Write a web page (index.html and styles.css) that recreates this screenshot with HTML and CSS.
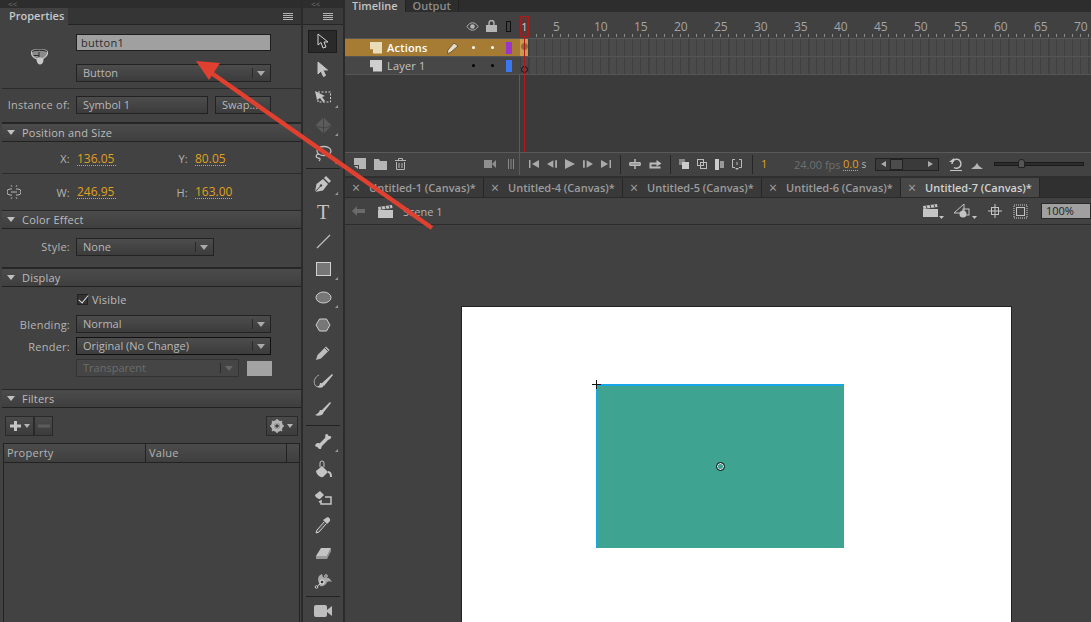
FILE: index.html
```html
<!DOCTYPE html>
<html lang="en">
<head>
    <meta charset="UTF-8">
    <title>Animate - Untitled-7 (Canvas)</title>
    <link rel="stylesheet" href="styles.css">
</head>
<body>
    <div class="app">
        <aside class="props">
            <div class="strip">&lt;&lt;</div>
            <div class="tab-bar">
                <div class="tab-active">Properties</div>
                <div class="menu-lines"></div>
            </div>

            <section class="name-sec">
                <div class="sym-icon">
                    <svg width="17" height="16" viewBox="0 0 17 16"><path d="M3.500 1h10c2 0 3 1 3 3s-1 3-3 4.500l-2 1.500h-6L3 8.500C1 7 .5 6 .5 4s1-3 3-3z" fill="#8a8a8a" stroke="#c4c4c4" stroke-width="1.200"/><path d="M1 2.500C3 1 14 1 16 2.500" stroke="#222" fill="none"/><path d="M8 3v5M2.500 6.500H8" stroke="#2e2e2e" fill="none"/><path d="M6.500 9c3-1 6-1 6 2 0 3-2 4.500-3.500 4.500S6 14 5.500 11z" fill="#c8c8c8"/></svg>
                </div>
                <div class="name-fields">
                    <div class="text-input">button1</div>
                    <div class="select">Button</div>
                </div>
            </section>

            <section class="inst-sec">
                <label class="lbl">Instance of:</label>
                <div class="field sym-field">Symbol 1</div>
                <div class="field swap">Swap...</div>
            </section>

            <div class="sec-head">Position and Size</div>
            <section class="pos-row xy">
                <label class="lbl lbl-x">X:</label><span class="val val-x">136.05</span>
                <label class="lbl lbl-y">Y:</label><span class="val">80.05</span>
            </section>
            <section class="pos-row wh">
                <svg class="link-icon" width="14" height="16" viewBox="0 0 14 16" fill="none" stroke="#b5b5b5"><path d="M5 5H3a3 3 0 0 0 0 6h2M9 5h2a3 3 0 0 1 0 6H9M4 8h6"/><path d="M4 1l1 2M10 1L9 3M4 15l1-2M10 15l-1-2" stroke-width=".8"/></svg>
                <label class="lbl lbl-x">W:</label><span class="val val-x">246.95</span>
                <label class="lbl lbl-y">H:</label><span class="val">163.00</span>
            </section>

            <div class="sec-head">Color Effect</div>
            <section class="style-sec">
                <label class="lbl">Style:</label>
                <div class="select select-short">None</div>
            </section>

            <div class="sec-head">Display</div>
            <section class="display-sec">
                <div class="form-row check-row"><span class="check"></span>Visible</div>
                <div class="form-row"><label class="lbl">Blending:</label><div class="select">Normal</div></div>
                <div class="form-row"><label class="lbl">Render:</label><div class="select select-dark">Original (No Change)</div></div>
                <div class="form-row">
                    <span class="lbl"></span>
                    <div class="select select-off">Transparent</div>
                    <span class="swatch"></span>
                </div>
            </section>

            <div class="sec-head">Filters</div>
            <section class="filter-bar">
                <div class="f-btn f-plus">
                    <svg width="22" height="12" viewBox="0 0 22 12"><path d="M1 6h11M6.500 1v10" stroke="#c4c4c4" stroke-width="3"/><path d="M15 4h6l-3 4z" fill="#b5b5b5"/></svg>
                </div>
                <div class="f-btn f-minus">
                    <svg width="12" height="4" viewBox="0 0 12 4"><path d="M0 2h12" stroke="#5d5d5d" stroke-width="3"/></svg>
                </div>
                <div class="f-btn f-gear">
                    <svg width="24" height="14" viewBox="0 0 24 14"><circle cx="7" cy="7" r="4.500" fill="none" stroke="#b5b5b5" stroke-width="3"/><path d="M7 0v14M0 7h14M2 2l10 10M12 2L2 12" stroke="#b5b5b5" stroke-width="1.600"/><circle cx="7" cy="7" r="1.800" fill="#3c3c3c"/><path d="M17 5h6l-3 4z" fill="#b5b5b5"/></svg>
                </div>
            </section>
            <div class="filter-table">
                <div class="filter-head">
                    <span class="col-prop">Property</span>
                    <span class="col-val">Value</span>
                </div>
            </div>
        </aside>

        <nav class="tools">
            <div class="strip">&lt;&lt;</div>
            <div class="tools-menu"><div class="menu-lines"></div></div>
            <div class="tool tool-on"><svg width="14" height="17" viewBox="0 0 14 17" fill="none" stroke="#d4d4d4"><path d="M2 1v11l3-2.500L7 15l3-1-2-5h4z"/></svg></div>
            <div class="tool"><svg width="14" height="17" viewBox="0 0 14 17"><path d="M2 1v12l3-3 2.500 5.500 2-1L7 9h4.500z" fill="#c4c4c4" stroke="#c4c4c4"/></svg></div>
            <div class="tool more"><svg width="18" height="14" viewBox="0 0 18 14"><path d="M4 2h12.500v10H4z" fill="none" stroke="#d0d0d0" stroke-dasharray="2 1.500"/><path d="M1 1l10 5-3 1 3 4-2 1-3-4-3 2z" fill="#c4c4c4"/></svg></div>
            <div class="tool more"><svg width="17" height="17" viewBox="0 0 17 17" fill="#5b5b5b" stroke="#5f5f5f"><path d="M8.500 1L16 8.500 8.500 16 1 8.500z"/><path d="M1 8.500c4 3 11 3 15 0M8.500 1v15" stroke="#444" fill="none"/></svg></div>
            <div class="tool more"><svg width="18" height="17" viewBox="0 0 18 17" fill="none" stroke="#bdbdbd" stroke-width="1.300"><ellipse cx="10" cy="6" rx="7" ry="4.500"/><path d="M5 9c-3 0-4 3-1 4 2 .5 3 1 1 3"/></svg></div>
            <div class="tool-sep"></div>
            <div class="tool more"><svg width="18" height="18" viewBox="0 0 18 18"><path d="M1 17l1.500-8L9 4l5 5-5 6.500z" fill="#c4c4c4"/><path d="M10 3l2-2 5 5-2 2z" fill="#c4c4c4"/><path d="M1 17l5.500-6" stroke="#444"/><circle cx="7" cy="10.500" r="1.200" fill="#444"/></svg></div>
            <div class="tool tool-t"><span class="t-glyph">T</span></div>
            <div class="tool"><svg width="15" height="15" viewBox="0 0 15 15"><path d="M1 14L14 1" stroke="#bdbdbd" stroke-width="1.200"/></svg></div>
            <div class="tool more"><svg width="15" height="14" viewBox="0 0 15 14"><rect x=".5" y=".5" width="14" height="13" fill="#777" stroke="#d0d0d0"/></svg></div>
            <div class="tool more"><svg width="17" height="13" viewBox="0 0 17 13"><ellipse cx="8.500" cy="6.500" rx="7.500" ry="5.500" fill="#777" stroke="#d0d0d0"/></svg></div>
            <div class="tool"><svg width="16" height="14" viewBox="0 0 16 14"><path d="M4.500 1h7L15 7l-3.500 6h-7L1 7z" fill="#777" stroke="#d0d0d0"/></svg></div>
            <div class="tool"><svg width="16" height="16" viewBox="0 0 16 16"><path d="M1 15l1.500-5L11 1.500 14.500 5 6 13.500z" fill="#bdbdbd"/><path d="M10 3l3.500 3.500" stroke="#444"/></svg></div>
            <div class="tool"><svg width="21" height="16" viewBox="0 0 21 16" fill="none"><path d="M6 2C2 4 0 8 2 12c1 2 3 2 5 1" stroke="#a8a8a8"/><path d="M8 11L19 1l1 1L11 13z" fill="#c4c4c4"/><path d="M7 10c2 0 4 2 3 4-2 1-4 1-6 0 2-1 3-2 3-4z" fill="#c4c4c4"/></svg></div>
            <div class="tool"><svg width="18" height="16" viewBox="0 0 18 16"><path d="M7 10L16 1l1 1-8 10z" fill="#c4c4c4"/><path d="M6 9c2 0 4 2 3 4-2 2-6 2-8 1 2-1 4-2 5-5z" fill="#c4c4c4"/></svg></div>
            <div class="tool-sep tool-sep-mid"></div>
            <div class="tool more"><svg width="17" height="17" viewBox="0 0 17 17"><path d="M12 1c1 0 1 2 2 2s3 0 2 2-3 1-4 3L7 13c-1 1 0 3-2 3s-2-2-3-2-3-1-1-3 3 0 4-1l5-5c1-1-1-4 2-4z" fill="#c4c4c4"/></svg></div>
            <div class="tool"><svg width="17" height="19" viewBox="0 0 17 19"><path d="M5 7V3a2 2 0 0 1 4 0v4" fill="none" stroke="#c4c4c4"/><path d="M1 11l6-5 6 6-5 5c-3 1-7-3-7-6z" fill="#c4c4c4"/><path d="M13 12c2 0 3 2 3 5" fill="none" stroke="#c4c4c4" stroke-width="2"/></svg></div>
            <div class="tool"><svg width="19" height="17" viewBox="0 0 19 17"><path d="M1 6l5-4 4 4-4 4c-2 0-5-2-5-4z" fill="#c4c4c4"/><path d="M11 8h6v7H7v-3l-2 1" fill="none" stroke="#c4c4c4" stroke-width="1.500"/></svg></div>
            <div class="tool"><svg width="16" height="18" viewBox="0 0 16 18"><path d="M9 6L2 14l-1 3 3-1 7-8" fill="#555" stroke="#d0d0d0"/><path d="M8 4l4 4 3-3c1-2-2-5-4-3z" fill="#c4c4c4"/></svg></div>
            <div class="tool"><svg width="17" height="13" viewBox="0 0 17 13"><path d="M6 1h10l-4 8H1z" fill="#c4c4c4"/><path d="M1 9h11v3H1zM12 9l4-8v3l-4 8z" fill="#9a9a9a"/></svg></div>
            <div class="tool"><svg width="19" height="17" viewBox="0 0 19 17"><path d="M4 7C4 4 5 2 8 1l1 3 3 1c2-1 4 0 6 4-2-1-3-1-5 0-1 3-4 5-7 4z" fill="#a8a8a8"/><circle cx="8" cy="9" r="2" fill="#333" stroke="#eee"/><circle cx="12" cy="3" r="1.300" fill="#333" stroke="#eee" stroke-width=".8"/><circle cx="2.500" cy="14" r="1.300" fill="#333" stroke="#eee" stroke-width=".8"/><path d="M3.500 13L7 10" stroke="#ddd"/></svg></div>
            <div class="tool-sep tool-sep-last"></div>
            <div class="tool"><svg width="18" height="12" viewBox="0 0 18 12"><rect width="13" height="12" rx="2" fill="#bdbdbd"/><path d="M13 5l5-4v10l-5-4z" fill="#bdbdbd"/></svg></div>
        </nav>

        <main class="main">
            <div class="tl-tabs">
                <span class="tl-tab tl-on">Timeline</span>
                <span class="tl-tab">Output</span>
            </div>

            <div class="timeline">
                <div class="tl-head">
                    <div class="tl-icons">
                        <svg width="13" height="9" viewBox="0 0 14 9"><path d="M1 4.500C3 1.500 5 .5 7 .5s4 1 6 4c-2 3-4 4-6 4s-4-1-6-4z" fill="none" stroke="#b5b5b5"/><circle cx="7" cy="4.500" r="2.500" fill="#b5b5b5"/></svg>
                        <svg width="11" height="12" viewBox="0 0 11 12"><path d="M3 5V3a2.500 2.500 0 0 1 5 0v2" fill="none" stroke="#b5b5b5" stroke-width="1.400"/><rect y="5" width="11" height="7" fill="#b5b5b5"/></svg>
                        <svg class="ol-head" width="5" height="11" viewBox="0 0 5 11"><rect x=".5" y=".5" width="4" height="10" fill="none" stroke="#0f0f0f"/></svg>
                    </div>
                    <div class="ruler">
                        <span>1</span><span>5</span><span>10</span><span>15</span><span>20</span><span>25</span><span>30</span><span>35</span><span>40</span><span>45</span><span>50</span><span>55</span><span>60</span><span>65</span><span>70</span>
                    </div>
                </div>

                <div class="layer layer-on">
                    <div class="layer-info">
                        <span class="page-icon page-light"></span>
                        <span class="layer-name">Actions</span>
                        <svg class="pen" width="12" height="12" viewBox="0 0 12 12"><path d="M0 12l1-4 6-7 4 3-7 6z" fill="#e6dcc8" stroke="#4c3a1c" stroke-width=".7"/></svg>
                        <i class="dot dot-w"></i><i class="dot dot-w"></i>
                        <span class="outline ol-purple"></span>
                    </div>
                    <div class="frames"><span class="key key-on"></span></div>
                </div>
                <div class="layer">
                    <div class="layer-info">
                        <span class="page-icon"></span>
                        <span class="layer-name">Layer 1</span>
                        <span class="pen-gap"></span>
                        <i class="dot"></i><i class="dot"></i>
                        <span class="outline ol-blue"></span>
                    </div>
                    <div class="frames"><span class="key"></span></div>
                </div>
                <div class="tl-empty"><div class="tl-empty-left"></div></div>

                <div class="playhead"><div class="play-box">1</div><div class="play-line"></div></div>

                <div class="tl-controls">
                    <div class="ctl-left">
                        <svg class="ic" width="12" height="12" viewBox="0 0 12 12"><path d="M0 0h12v11H5V7H0z" fill="#b5b5b5"/><path d="M0 8h4v3z" fill="#b5b5b5"/></svg>
                        <svg class="ic" width="13" height="11" viewBox="0 0 13 11"><path d="M0 0h5l1 2h7v9H0z" fill="#b5b5b5"/></svg>
                        <svg class="ic" width="11" height="12" viewBox="0 0 11 12" fill="none" stroke="#b5b5b5"><path d="M0 2.500h11M3.500 2V.5h4V2M1.500 4v7.500h8V4M4 5v5M7 5v5"/></svg>
                        <svg class="ic ic-cam" width="12" height="8" viewBox="0 0 12 8"><rect width="8" height="8" fill="#8f8f8f"/><path d="M8 4l4-4v8z" fill="#8f8f8f"/></svg>
                        <svg class="ic ic-bars" width="6" height="10" viewBox="0 0 6 10"><path d="M.5 0v10M3 0v10M5.500 0v10" stroke="#888"/></svg>
                    </div>
                    <div class="ctl-right">
                        <svg class="pb" width="10" height="8" viewBox="0 0 10 8"><path d="M0 0h1.500v8H0zM10 0v8L3 4z" fill="#aaa"/></svg>
                        <svg class="pb" width="10" height="8" viewBox="0 0 11 8"><path d="M7 0v8L0 4zM9 0h2v8H9z" fill="#aaa"/></svg>
                        <svg class="pb" width="10" height="10" viewBox="0 0 10 10"><path d="M0 0l10 5-10 5z" fill="#aaa"/></svg>
                        <svg class="pb" width="10" height="8" viewBox="0 0 11 8"><path d="M4 0v8l7-4zM0 0h2v8H0z" fill="#aaa"/></svg>
                        <svg class="pb pb-last" width="10" height="8" viewBox="0 0 10 8"><path d="M8.500 0H10v8H8.500zM0 0v8l7-4z" fill="#aaa"/></svg>
                        <span class="ctl-sep"></span>
                        <svg class="ob" width="12" height="10" viewBox="0 0 12 10"><path d="M0 5h12M6 0v3M6 7v3" stroke="#bbb" stroke-width="1.500"/><rect x="1" y="3.500" width="10" height="3" fill="none" stroke="#bbb"/></svg>
                        <svg class="ob" width="13" height="10" viewBox="0 0 13 10"><path d="M.5 3.500h7V1l5 3.500-5 3V5.500h-5v2h9v2H.5z" fill="#bbb"/></svg>
                        <span class="ctl-sep"></span>
                        <svg class="ob" width="10" height="10" viewBox="0 0 10 10"><rect width="6" height="6" fill="#888"/><rect x="3" y="3" width="7" height="7" fill="#ccc"/></svg>
                        <svg class="ob" width="10" height="10" viewBox="0 0 10 10" fill="none" stroke="#bbb"><rect x=".5" y=".5" width="6" height="6"/><rect x="3.500" y="3.500" width="6" height="6"/></svg>
                        <svg class="ob" width="9" height="11" viewBox="0 0 9 11"><rect width="4" height="11" fill="#ccc"/><rect x="5" y="2" width="4" height="7" fill="#999"/></svg>
                        <svg class="ob ob-last" width="10" height="11" viewBox="0 0 10 11" fill="none" stroke="#bbb"><path d="M3 .5H.5v8H3M7 .5h2.500v8H7M5 3v3"/><path d="M3 9h4l-2 2z" fill="#bbb" stroke="none"/></svg>
                        <span class="ctl-sep"></span>
                        <span class="cur-frame">1</span>
                        <span class="fps">24.00 fps</span>
                        <span class="elapsed">0.0</span><span class="sec-s">s</span>
                        <div class="scroller">
                            <i class="arr-l"></i><span class="thumb"></span><i class="arr-r"></i>
                        </div>
                        <svg class="loop" width="14" height="14" viewBox="0 0 14 14" fill="none" stroke="#c4c4c4" stroke-width="1.500"><path d="M3 7a4.500 4.500 0 1 1 2 3.500"/><path d="M0 5h5V1z" fill="#c4c4c4" stroke="none"/><path d="M1 13.500h12" stroke-width="1"/></svg>
                        <svg class="hill" width="12" height="6" viewBox="0 0 12 6"><path d="M0 6l4-3 2-3 2 3 4 3z" fill="#b5b5b5"/></svg>
                        <div class="zoom-slider"><span class="zoom-knob"></span></div>
                    </div>
                </div>
            </div>

            <div class="doc-tabs">
                <div class="doc-tab"><span class="x">×</span>Untitled-1 (Canvas)*</div>
                <div class="doc-tab"><span class="x">×</span>Untitled-4 (Canvas)*</div>
                <div class="doc-tab"><span class="x">×</span>Untitled-5 (Canvas)*</div>
                <div class="doc-tab"><span class="x">×</span>Untitled-6 (Canvas)*</div>
                <div class="doc-tab doc-on"><span class="x">×</span>Untitled-7 (Canvas)*</div>
            </div>

            <div class="scene-bar">
                <svg class="back" width="13" height="10" viewBox="0 0 13 10"><path d="M0 5l5-5v3h8v4H5v3z" fill="#6a6a6a"/></svg>
                <svg class="clap" width="15" height="13" viewBox="0 0 15 13"><path d="M0 5h15v8H0z" fill="#c4c4c4"/><path d="M0 2l14-2 .5 3L.5 5z" fill="#c4c4c4"/><path d="M3 1.500l1 3M7 1l1 3M11 .5l1 3" stroke="#444"/></svg>
                <span class="scene-name">Scene 1</span>
                <div class="scene-right">
                    <svg width="21" height="16" viewBox="0 0 21 16"><path d="M0 6h15v8H0z" fill="#c4c4c4"/><path d="M0 3l14-2 .5 3L.5 6z" fill="#c4c4c4"/><path d="M3 2.500l1 3M7 2l1 3M11 1.500l1 3" stroke="#444"/><path d="M16 13h5l-2.500 3z" fill="#c4c4c4"/></svg>
                    <svg class="scene-shape" width="23" height="16" viewBox="0 0 23 16"><path d="M0 10L10 1v9z" fill="none" stroke="#c4c4c4"/><circle cx="9" cy="11" r="3.500" fill="#c4c4c4"/><rect x="9" y="6" width="6" height="6" fill="none" stroke="#c4c4c4"/><path d="M18 13h5l-2.500 3z" fill="#c4c4c4"/></svg>
                    <svg width="14" height="14" viewBox="0 0 14 14" fill="none" stroke="#c4c4c4"><path d="M7 0v14M0 7h14"/><rect x="3.500" y="3.500" width="7" height="7"/></svg>
                    <svg width="15" height="15" viewBox="0 0 15 15" fill="none"><rect x="1" y="1" width="13" height="13" stroke="#888" stroke-width="2" stroke-dasharray="1 1"/><rect x="3.500" y="3.500" width="8" height="8" stroke="#c4c4c4"/></svg>
                    <div class="zoom-box">100%</div>
                </div>
            </div>

            <div class="stage-area">
                <div class="stage">
                    <div class="shape">
                        <span class="cross"></span>
                        <span class="reg"></span>
                    </div>
                </div>
            </div>
        </main>

        <svg class="arrow" width="1091" height="622" viewBox="0 0 1091 622">
            <path d="M432 228L210 72" stroke="#e0402f" stroke-width="4.500"/>
            <path d="M196 61l24 2-11 17z" fill="#e0402f"/>
        </svg>
    </div>
</body>
</html>
```

FILE: styles.css
```css
* {
    box-sizing: border-box;
}
html, body {
    margin: 0;
    height: 100%;
    overflow: hidden;
    background: #414141;
}
body {
    font-family: "Open Sans", "Liberation Sans", sans-serif;
    font-size: 11px;
    color: #b4b4b4;
}
.app {
    position: relative;
    display: flex;
    width: 1091px;
    height: 622px;
    background: #262626;
}
svg {
    display: block;
    flex: none;
}

/* properties panel */
.props {
    width: 303px;
    flex: none;
    padding-left: 2px;
    background: #424242;
    border-right: 2px solid #2b2b2b;
}
.strip {
    height: 8px;
    margin-left: -2px;
    padding-left: 8px;
    background: #2d2d2d;
    color: #777;
    font-size: 8px;
    line-height: 8px;
}
.tab-bar {
    display: flex;
    justify-content: space-between;
    align-items: center;
    height: 17px;
    background: #353535;
    border-bottom: 1px solid #242424;
}
.tab-active {
    width: 66px;
    height: 17px;
    padding-left: 7px;
    line-height: 16px;
    font-weight: 600;
    color: #c8c8c8;
    background: #424242;
}
.menu-lines {
    width: 10px;
    height: 7px;
    margin-right: 8px;
    background: repeating-linear-gradient(#b5b5b5 0 1px, transparent 1px 2px);
}
.name-sec {
    display: flex;
    height: 64px;
    border-bottom: 1px solid #2b2b2b;
}
.sym-icon {
    width: 74px;
    padding: 24px 0 0 29px;
}
.name-fields {
    width: 195px;
    padding-top: 9px;
}
.text-input {
    height: 17px;
    padding-left: 4px;
    line-height: 15px;
    color: #2c2c2c;
    background: #a0a0a0;
    border: 1px solid #1e1e1e;
    letter-spacing: .3px;
}
.name-fields .select {
    margin-top: 13px;
}
.select, .field {
    height: 18px;
    padding-left: 6px;
    line-height: 16px;
    color: #b8b8b8;
    background: linear-gradient(#4c4c4c, #3c3c3c);
    border: 1px solid #222;
}
.select {
    position: relative;
    width: 195px;
}
.select::before {
    content: "";
    position: absolute;
    top: 3px;
    right: 17px;
    width: 1px;
    height: 10px;
    background: #2a2a2a;
}
.select::after {
    content: "";
    position: absolute;
    top: 6px;
    right: 5px;
    border: 4px solid transparent;
    border-top: 5px solid #aaa;
    border-bottom: 0;
}
.lbl {
    color: #b4b4b4;
    text-align: right;
    letter-spacing: .25px;
    white-space: nowrap;
}
.inst-sec {
    display: flex;
    align-items: center;
    height: 34px;
    padding: 0 0 2px 4px;
    border-bottom: 1px solid #262626;
}
.inst-sec .lbl {
    width: 64px;
    margin-right: 6px;
}
.sym-field {
    width: 132px;
}
.swap {
    width: 56px;
    margin-left: 7px;
}
.sec-head {
    position: relative;
    height: 19px;
    padding-left: 20px;
    line-height: 17px;
    letter-spacing: .2px;
    color: #bcbcbc;
    background: linear-gradient(#4b4b4b, #3f3f3f);
    border-top: 1px solid #262626;
    border-bottom: 1px solid #222;
}
.sec-head::before {
    content: "";
    position: absolute;
    top: 6px;
    left: 5px;
    border: 4px solid transparent;
    border-top: 5px solid #c0c0c0;
    border-bottom: 0;
}
.pos-row {
    display: flex;
    align-items: center;
    position: relative;
    height: 32px;
    padding-top: 2px;
    border-bottom: 1px solid #2c2c2c;
}
.pos-row.wh {
    height: 36px;
    padding-top: 0;
    border-bottom: 0;
}
.link-icon {
    position: absolute;
    left: 5px;
    top: 10px;
}
.lbl-x {
    width: 68px;
}
.lbl-y {
    width: 65px;
}
.val {
    margin-left: 7px;
    color: #e0a020;
    border-bottom: 1px dotted #e0a020;
    line-height: 13px;
    font-size: 12px;
}
.val-x {
    width: 39px;
    margin-right: 7px;
    flex: none;
}
.style-sec {
    display: flex;
    align-items: flex-start;
    height: 39px;
    padding: 9px 0 0 0;
    border-bottom: 1px solid #262626;
}
.style-sec .lbl {
    width: 68px;
    margin-right: 6px;
    line-height: 17px;
}
.select-short {
    width: 138px;
}
.display-sec {
    height: 102px;
}
.form-row {
    display: flex;
    align-items: center;
    height: 22px;
}
.form-row .lbl {
    width: 68px;
    margin-right: 6px;
}
.check-row {
    height: 25px;
    margin-bottom: 1px;
    padding-left: 75px;
    color: #bcbcbc;
    letter-spacing: .25px;
}
.check {
    position: relative;
    width: 11px;
    height: 11px;
    margin-right: 4px;
    background: #333;
    border: 1px solid #222;
}
.check::after {
    content: "";
    position: absolute;
    left: 3px;
    top: -2px;
    width: 4px;
    height: 9px;
    border-right: 1.500px solid #ddd;
    border-bottom: 1.500px solid #ddd;
    transform: rotate(40deg);
}
.select-dark {
    border-color: #111;
}
.select-off {
    width: 163px;
    color: #6c6c6c;
    background: #454545;
    border-color: #333;
}
.select-off::after {
    border-top-color: #666;
}
.swatch {
    width: 25px;
    height: 15px;
    margin-left: 8px;
    background: #a3a3a3;
}
.filter-bar {
    display: flex;
    height: 35px;
    padding: 8px 0 0 3px;
}
.f-btn {
    display: flex;
    align-items: center;
    justify-content: center;
    height: 20px;
    background: linear-gradient(#4a4a4a, #3c3c3c);
    border: 1px solid #2a2a2a;
}
.f-plus {
    width: 29px;
}
.f-minus {
    width: 19px;
}
.f-gear {
    width: 32px;
    margin-left: auto;
    margin-right: 3px;
}
.filter-table {
    height: 200px;
    margin: 0 1px;
    border: 1px solid #222;
}
.filter-head {
    display: flex;
    height: 19px;
    line-height: 18px;
    letter-spacing: .25px;
    background: linear-gradient(#4b4b4b, #3f3f3f);
    border-bottom: 1px solid #222;
}
.col-prop {
    width: 142px;
    padding-left: 3px;
    border-right: 1px solid #222;
}
.col-val {
    width: 141px;
    padding-left: 3px;
    border-right: 1px solid #222;
}

/* toolbar */
.tools {
    width: 42px;
    flex: none;
    background: #424242;
    border-right: 2px solid #2b2b2b;
}
.tools .strip {
    margin: 0;
}
.tools-menu {
    height: 17px;
    padding: 5px 0 0 20px;
    background: #3a3a3a;
    border-bottom: 1px solid #262626;
}
.tools-menu .menu-lines {
    margin: 0;
}
.tool {
    position: relative;
    display: flex;
    align-items: center;
    justify-content: center;
    width: 40px;
    height: 28px;
}
.tool-on {
    width: 29px;
    height: 23px;
    margin: 5px 0 2px 5px;
    background: #2a2a2a;
    border: 1px solid #1c1c1c;
}
.tool-t {
    height: 29px;
}
.more::after {
    content: "";
    position: absolute;
    right: 5px;
    bottom: 3px;
    border-left: 3px solid transparent;
    border-bottom: 3px solid #999;
}
.tool-sep {
    height: 1px;
    margin: 1px 3px;
    background: #222;
}
.tool-sep-mid {
    margin-top: 2px;
}
.tool-sep-last {
    margin-bottom: 0;
}
.t-glyph {
    font-family: "Liberation Serif", serif;
    font-size: 20px;
    color: #c4c4c4;
}

/* timeline */
.main {
    position: relative;
    flex: 1;
    min-width: 0;
    background: #414141;
}
.tl-tabs {
    display: flex;
    height: 12px;
    background: #2d2d2d;
    overflow: hidden;
}
.tl-tab {
    height: 12px;
    padding: 0 7px;
    line-height: 12px;
    font-weight: 600;
    color: #8c8c8c;
    border-right: 1px solid #222;
}
.tl-on {
    color: #c4c4c4;
    background: #414141;
}
.timeline {
    position: relative;
    height: 166px;
    background: #2f2f2f;
}
.tl-head {
    display: flex;
    height: 27px;
    background: #414141;
    border-bottom: 1px solid #575757;
}
.tl-icons {
    display: flex;
    align-items: center;
    flex: none;
    width: 175px;
    padding: 2px 0 0 121px;
    gap: 7px;
}
.ol-head {
    margin-left: 2px;
}
.ruler {
    display: flex;
    flex: 1;
    min-width: 0;
    overflow: hidden;
    padding-left: 2px;
    line-height: 30px;
    color: #a4a4a4;
    font-size: 12px;
    background: repeating-linear-gradient(90deg, #8a8a8a 0 1px, transparent 1px 8px) 0 22px / 100% 3px no-repeat;
}
.ruler span {
    width: 40px;
    flex: none;
}
.ruler span:first-child {
    width: 31px;
}
.ruler span:nth-child(2) {
    width: 41px;
}
.layer {
    display: flex;
    height: 18px;
    border-bottom: 1px solid #555;
    background: #474747;
}
.layer-info {
    display: flex;
    align-items: center;
    width: 175px;
    flex: none;
    padding-left: 25px;
}
.layer-on .layer-info {
    background: #a67c35;
}
.page-icon {
    width: 12px;
    height: 12px;
    background: #cfcfcf;
    clip-path: polygon(0 0, 100% 0, 100% 100%, 25% 100%, 25% 65%, 0 65%);
}
.page-light {
    background: #eadcb8;
}
.layer-name {
    width: 60px;
    margin-left: 5px;
    letter-spacing: .2px;
    color: #c4c4c4;
}
.layer-on .layer-name {
    font-weight: 600;
    color: #fff;
}
.pen-gap {
    width: 12px;
}
.dot {
    width: 3px;
    height: 3px;
    margin-left: 13px;
    border-radius: 50%;
    background: #000;
}
.layer-info .dot:nth-of-type(2) {
    margin-left: 16px;
}
.dot-w {
    background: #fff;
}
.outline {
    width: 6px;
    height: 12px;
    margin-left: 12px;
}
.ol-purple {
    background: #9b35c8;
}
.ol-blue {
    background: #3a78f0;
}
.frames {
    position: relative;
    flex: 1;
    background:
        repeating-linear-gradient(90deg, #414141 0 2px, transparent 2px 40px) 8px 0,
        repeating-linear-gradient(90deg, #404040 0 1px, #4b4b4b 1px 8px);
}
.key {
    position: absolute;
    left: 0;
    top: 0;
    width: 8px;
    height: 17px;
}
.key::after {
    content: "";
    position: absolute;
    left: 1px;
    top: 9px;
    width: 5px;
    height: 5px;
    border: 1px solid #111;
    border-radius: 50%;
}
.key-on {
    background: #c99a52;
}
.key-on::after {
    top: 4px;
    background: #8a6a35;
    border-color: #8a6a35;
}
.tl-empty {
    height: 77px;
    background: #3b3b3b;
}
.tl-empty-left {
    width: 175px;
    height: 100%;
    border-right: 1px solid #5b5b5b;
}
.playhead {
    position: absolute;
    left: 175px;
    top: 4px;
    width: 9px;
}
.play-box {
    height: 21px;
    line-height: 19px;
    text-align: center;
    font-size: 11px;
    color: #d0d0d0;
    background: #5c3838;
    border: 1px solid #a81c1c;
}
.play-line {
    width: 1px;
    height: 115px;
    margin-left: 4px;
    background: #b0181c;
}
.tl-controls {
    display: flex;
    align-items: center;
    height: 24px;
    padding-bottom: 1px;
    background: #424242;
    border-top: 1px solid #5a5a5a;
}
.ctl-left {
    display: flex;
    align-items: center;
    width: 175px;
    flex: none;
    height: 100%;
    padding-left: 9px;
    border-right: 1px solid #5b5b5b;
}
.ctl-left .ic {
    margin-right: 8px;
}
.ctl-left .ic-cam {
    margin-left: 70px;
}
.ctl-left .ic-bars {
    margin-left: 4px;
}
.ctl-right {
    display: flex;
    align-items: center;
    flex: 1;
    height: 100%;
    padding-left: 9px;
}
.pb {
    margin-right: 8px;
}
.pb-last {
    margin-right: 9px;
}
.ctl-sep {
    width: 1px;
    height: 19px;
    margin-right: 8px;
    background: #262626;
}
.ob {
    margin-right: 8px;
}
.ob-last {
    margin-right: 10px;
}
.cur-frame {
    width: 33px;
    color: #e0a020;
    line-height: 12px;
}
.fps {
    width: 49px;
    color: #6f6f6f;
}
.elapsed {
    color: #e0a020;
    border-bottom: 1px dotted #e0a020;
    line-height: 13px;
}
.sec-s {
    margin: 0 9px 0 3px;
    font-size: 10px;
}
.scroller {
    display: flex;
    align-items: center;
    justify-content: space-between;
    position: relative;
    flex: none;
    width: 64px;
    height: 13px;
    padding: 0 5px;
    margin-right: 10px;
    background: #3a3a3a;
    border: 1px solid #222;
}
.arr-l {
    border: 3px solid transparent;
    border-right: 5px solid #aaa;
    border-left: 0;
}
.arr-r {
    border: 3px solid transparent;
    border-left: 5px solid #aaa;
    border-right: 0;
}
.thumb {
    position: absolute;
    left: 14px;
    top: 0;
    width: 13px;
    height: 11px;
    background: #4c4c4c;
    border: 1px solid #222;
}
.loop {
    margin-right: 8px;
}
.hill {
    margin: 3px 11px 0 0;
}
.zoom-slider {
    position: relative;
    flex: none;
    width: 90px;
    height: 4px;
    background: #2c2c2c;
    border: 1px solid #1a1a1a;
}
.zoom-knob {
    position: absolute;
    left: 23px;
    top: -4px;
    width: 7px;
    height: 9px;
    background: #555;
    border: 1px solid #222;
    border-radius: 3px 3px 0 0;
}

/* document tabs and edit bar */
.doc-tabs {
    display: flex;
    height: 20px;
    background: #303030;
    border-bottom: 1px solid #2a2a2a;
}
.doc-tab {
    display: flex;
    align-items: center;
    width: 139px;
    font-weight: 600;
    color: #9c9c9c;
    background: #393939;
    border-right: 1px solid #262626;
}
.doc-on {
    color: #d2d2d2;
    background: #474747;
}
.x {
    width: 24px;
    padding-left: 7px;
    font-size: 14px;
    font-weight: 400;
    line-height: 14px;
    color: #a0a0a0;
}
.scene-bar {
    display: flex;
    align-items: center;
    height: 27px;
    padding-left: 7px;
    background: #424242;
    border-bottom: 1px solid #2c2c2c;
}
.back {
    margin-right: 13px;
}
.clap {
    margin-right: 10px;
}
.scene-right {
    display: flex;
    align-items: center;
    margin-left: auto;
    gap: 11px;
}
.scene-shape {
    margin-left: -1px;
}
.zoom-box {
    width: 50px;
    height: 16px;
    margin-left: 2px;
    padding-left: 4px;
    line-height: 14px;
    color: #222;
    background: #a0a0a0;
    border: 1px solid #2a2a2a;
}

/* stage */
.stage-area {
    height: 397px;
    padding: 81px 0 0 116px;
    background: #414141;
}
.stage {
    width: 551px;
    height: 330px;
    padding: 77px 0 0 134px;
    background: #fff;
    border: 1px solid #222;
    border-bottom: 0;
}
.shape {
    position: relative;
    width: 248px;
    height: 164px;
    background: #3fa391;
    border-top: 2px solid #17a6e6;
    border-left: 2px solid #17a6e6;
}
.cross {
    position: absolute;
    left: -6px;
    top: -6px;
    width: 9px;
    height: 9px;
    background:
        linear-gradient(#111, #111) 4px 0 / 1px 9px no-repeat,
        linear-gradient(#111, #111) 0 4px / 9px 1px no-repeat;
}
.reg {
    position: absolute;
    left: 118px;
    top: 76px;
    width: 9px;
    height: 9px;
    border: 1.500px solid #111;
    border-radius: 50%;
    box-shadow: 0 0 0 1px #e8e8e8 inset;
}
.arrow {
    position: absolute;
    left: 0;
    top: 0;
    pointer-events: none;
}
```
